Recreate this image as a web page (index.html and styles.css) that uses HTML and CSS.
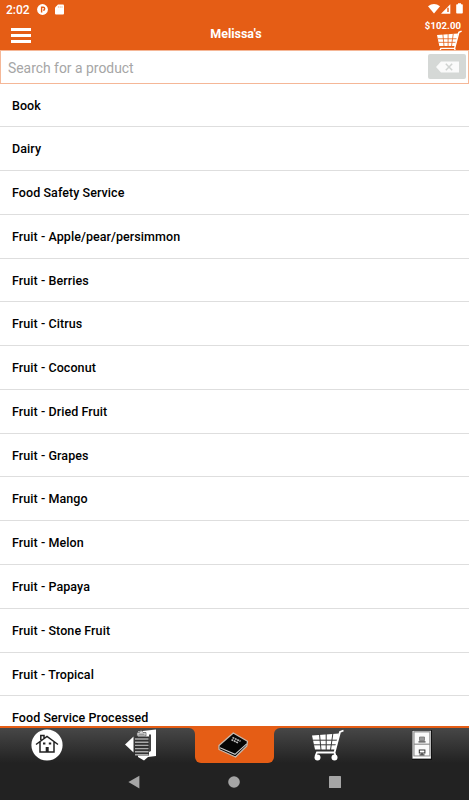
FILE: index.html
```html
<!DOCTYPE html>
<html lang="en"><head>
<meta charset="utf-8">
<title>Melissa's</title>
<meta name="viewport" content="width=device-width, initial-scale=1.0">
<link rel="stylesheet" href="styles.css">
</head>
<body>

<svg class="defs" width="0" height="0">
  <symbol id="cart" viewBox="0 0 32 32">
    <path d="M0 6.5L27 4.5L23.5 20.5H3Z" fill="#fff"/>
    <path d="M1 11.2H26M2 15.8H25M7.5 5L9 21M14.2 5V21M20.8 5L18.5 21" fill="none" stroke="currentColor" stroke-width="1"/>
    <path d="M31.5 1.5L28 3L22.5 23.5H5L3.5 27M22.5 23.5L23.5 27" fill="none" stroke="#fff" stroke-width="1.8"/>
    <circle cx="5.5" cy="28.5" r="3" fill="#fff"/>
    <circle cx="22.5" cy="28.5" r="3" fill="#fff"/>
  </symbol>
</svg>

<div class="app">
  <header class="header">
    <div class="status">
      <span class="time">2:02</span>
      <svg class="app-icon" width="11" height="11" viewBox="0 0 11 11">
        <circle cx="5.5" cy="5.5" r="5.4" fill="#fff"/>
        <path d="M4.6 8.6V3.2H6.2A1.5 1.5 0 0 1 6.2 6.2" fill="none" stroke="#e55d15" stroke-width="1.4"/>
      </svg>
      <svg width="9" height="11" viewBox="0 0 9 11">
        <path d="M3 .5H8Q9 .5 9 1.5V9.5Q9 10.5 8 10.5H1Q0 10.5 0 9.5V3.5Z" fill="#fff"/>
        <path d="M3.4 2V4M5.2 2V4M7 2V4" stroke="#f3b491" stroke-width=".7"/>
      </svg>
      <span class="space"></span>
      <svg width="36" height="12" viewBox="0 0 36 12">
        <path d="M0 3.3Q6 -1.3 12 3.3L6 10.5Z" fill="#fff"/>
        <path d="M13 10.7L22.3 1.2V10.7Z" fill="#fff"/>
        <path d="M20 4.8V9" stroke="#e55d15" stroke-width="1.4"/>
        <path d="M28.2 2Q28.2 1.3 29 1.3H30V.2H33V1.3H34Q34.8 1.3 34.8 2V9.8Q34.8 10.6 34 10.6H29Q28.2 10.6 28.2 9.8Z" fill="#fff"/>
      </svg>
    </div>
    <div class="bar">
      <button class="menu" aria-label="Menu"><i></i><i></i><i></i></button>
      <h1 class="title">Melissa's</h1>
      <div class="total">
        <span>$102.00</span>
        <svg class="cart-top" width="25" height="25"><use href="#cart"/></svg>
      </div>
    </div>
  </header>

  <div class="search">
    <input type="text" placeholder="Search for a product">
    <button class="clear" aria-label="Clear">
      <svg width="23" height="12" viewBox="0 0 23 12">
        <path d="M0 6L5 .5H23V11.5H5Z" fill="#fafafa"/>
        <path d="M9.8 2.8L16.2 9.2M16.2 2.8L9.8 9.2" stroke="#d0d3d1" stroke-width="1.5"/>
      </svg>
    </button>
  </div>

  <ul class="list">
    <li>Book</li>
    <li>Dairy</li>
    <li>Food Safety Service</li>
    <li>Fruit - Apple/pear/persimmon</li>
    <li>Fruit - Berries</li>
    <li>Fruit - Citrus</li>
    <li>Fruit - Coconut</li>
    <li>Fruit - Dried Fruit</li>
    <li>Fruit - Grapes</li>
    <li>Fruit - Mango</li>
    <li>Fruit - Melon</li>
    <li>Fruit - Papaya</li>
    <li>Fruit - Stone Fruit</li>
    <li>Fruit - Tropical</li>
    <li>Food Service Processed</li>
  </ul>

  <nav class="tabs">
    <a class="tab">
      <svg width="32" height="32" viewBox="0 0 32 32">
        <circle cx="16" cy="16" r="15.6" fill="#fff"/>
        <path d="M5 15.5L16 7.5L27 15.5M9 13V23H23V13M9.8 11V6.5H13V9.5" fill="none" stroke="#222" stroke-width="1.5"/>
        <path d="M14.7 18H17.7V23H14.7ZM12 13.5H14.4V15.5H12ZM17.8 13.5H20.2V15.5H17.8Z" fill="#222"/>
      </svg>
    </a>
    <a class="tab before">
      <svg width="33" height="32" viewBox="0 0 33 32">
        <path d="M1 15.5L9.5 7.5V23.5Z" fill="#fff"/>
        <path d="M14 2.5L32 .5V27L24 28L20 31.5L14 28Z" fill="#fff"/>
        <path d="M25 5.5H27V22L25 23Z" fill="#444"/>
        <path d="M11 7.5H25V26.5H11Z" fill="#333"/>
        <path d="M11 10H24.5M11 13.2H24.5M11 16.4H24.5M11 19.6H24.5M11 22.8H24.5M11 25.8H24.5" stroke="#aaa" stroke-width="1.4"/>
        <path d="M13 7V3.5H15.5L17 .8L19 3.5H22V7Z" fill="#ddd" stroke="#555" stroke-width=".7"/>
        <path d="M14.5 5.2H20.5" stroke="#777"/>
      </svg>
    </a>
    <a class="tab active">
      <svg width="31" height="27" viewBox="0 0 31 27">
        <path d="M15.3 1L29.5 9.3L28.8 14L17.5 25L1 17.5V13.5Z" fill="#050505" stroke="#c8b9ae" stroke-width="1.3" stroke-linejoin="round"/>
        <path d="M2 15.8L17 22.3L28.7 11.8" fill="none" stroke="#ccc" stroke-width="1.1"/>
        <path d="M14.5 5.5L22.5 9.3M13.5 7.7L20.5 11" stroke="#bbb" stroke-width="1.6" stroke-dasharray="2 .6"/>
      </svg>
    </a>
    <a class="tab after"><svg class="cart-tab" width="32" height="32"><use href="#cart"/></svg></a>
    <a class="tab last">
      <svg width="20" height="30" viewBox="0 0 20 30">
        <rect width="20" height="30" fill="#111"/>
        <rect x=".3" y=".7" width="18.7" height="28" fill="#ccc"/>
        <path d="M2.5 2.5H17.5V13.5H2.5ZM2.5 15H17.5V25.5H2.5Z" fill="#fafafa"/>
        <path d="M2 1.8H17.8V26H2V1.8M2 14.2H18" fill="none" stroke="#888" stroke-width=".8"/>
        <path d="M7.5 7H12.5V10.5H7.5Z" fill="#999" stroke="#777" stroke-width=".8"/>
        <path d="M6.5 11.8H13.5M10 23V25M7.5 24.8H12.5" stroke="#444" stroke-width="1.2"/>
        <rect x="7.3" y="20" width="5.6" height="3" fill="#fff" stroke="#333"/>
        <path d="M1 27.4H18.5" stroke="#fff" stroke-width="1.5"/>
      </svg>
    </a>
  </nav>

  <div class="sysnav">
    <svg width="12" height="14" viewBox="0 0 12 14"><path d="M.4 7L11.4 .7V13.5Z" fill="#a5a5a5"/></svg>
    <svg width="12" height="12" viewBox="0 0 12 12"><circle cx="6" cy="6" r="5.8" fill="#a5a5a5"/></svg>
    <svg width="12" height="12" viewBox="0 0 12 12"><rect width="12" height="12" rx=".6" fill="#a5a5a5"/></svg>
  </div>
</div>
</body>
</html>
```
FILE: styles.css
```css
*,*::before,*::after {box-sizing: border-box;}
body {
  margin: 0;
  font-family: Roboto, sans-serif;
  background: #fff;
  color: #000;
}
button {
  padding: 0;
  border: 0;
  background: none;
}
svg {display: block; flex: none;}
.defs {position: absolute;}
.app {
  display: flex;
  flex-direction: column;
  height: 800px;
  overflow: hidden;
}
.header {
  height: 50px;
  flex: none;
  background: #e55d15;
  color: #fff;
  overflow: hidden;
}
.status {
  display: flex;
  align-items: center;
  height: 18px;
  padding: 0 5px 0 6px;
}
.time {
  width: 31px;
  padding-top: 1px;
  font-size: 12px;
  font-weight: 500;
}
.app-icon {margin-right: 7px;}
.space {flex: 1;}
.bar {
  display: grid;
  grid-template-columns: 60px 1fr 60px;
  height: 32px;
}
.menu {
  display: flex;
  flex-direction: column;
  gap: 3.5px;
  padding: 10px 0 0 11px;
}
.menu i {
  width: 20px;
  height: 2.5px;
  background: #fff;
}
.title {
  margin: 0;
  padding-left: 3px;
  font-size: 12.5px;
  line-height: 32px;
  font-weight: 700;
  text-align: center;
}
.total {
  padding: 1px 8px 0 0;
  font-size: 9.5px;
  line-height: 13px;
  font-weight: 700;
  letter-spacing: .1px;
  text-align: right;
}
.cart-top {
  margin: -2px 0 0 28px;
  color: #e55d15;
}
.search {
  display: flex;
  align-items: center;
  flex: none;
  height: 33.6px;
  padding: 0 2px 0 7px;
  border: 1px solid #f5b797;
}
.search input {
  flex: 1;
  min-width: 0;
  padding: 2px 0 0;
  border: 0;
  outline: 0;
  font: 13.9px Roboto, sans-serif;
}
.search input::placeholder {color: #a6a6a6;}
.clear {
  display: flex;
  align-items: center;
  justify-content: center;
  width: 38px;
  height: 25px;
  border-radius: 2px;
  background: #d5d8d6;
}
.list {
  flex: 1;
  min-height: 0;
  margin: 0;
  padding: 0;
  list-style: none;
  overflow: hidden;
}
.list li {
  height: 43.78px;
  padding-left: 12px;
  border-bottom: 1px solid #dedede;
  font-size: 12.5px;
  line-height: 43.8px;
  font-weight: 500;
  letter-spacing: .07px;
}
.tabs {
  display: grid;
  grid-template-columns: 93px 102px 79px 107px 88px;
  flex: none;
  height: 37px;
  padding-top: 2px;
  background: #e55d15;
}
.tab {
  display: flex;
  justify-content: center;
  align-items: flex-start;
  padding-top: 1px;
  background: linear-gradient(#474747, #222);
}
.before {border-top-right-radius: 6px; padding-right: 8px;}
.after {border-top-left-radius: 6px;}
.last {padding: 2px 6px 0 0;}
.active {
  padding: 4px 2px 0 0;
  background: #e55d15;
  border-radius: 0 0 6px 6px;
  box-shadow: 0 6px 0 #222;
  clip-path: inset(0);
}
.cart-tab {color: #3a3a3a;}
.sysnav {
  display: flex;
  justify-content: center;
  align-items: center;
  gap: 88.5px;
  flex: none;
  height: 37px;
  padding: 0 1px 0 0;
  background: #222;
}
```
